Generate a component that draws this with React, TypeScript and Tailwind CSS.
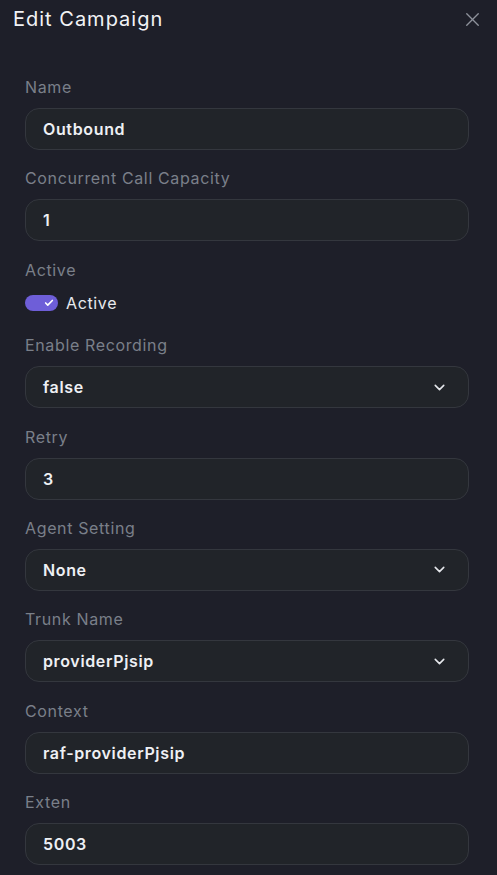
import React from "react"
import { ChevronDown, X, Check } from "lucide-react"

type Field =
  | { kind: "input"; label: string; value: string }
  | { kind: "select"; label: string; value: string }
  | { kind: "toggle"; label: string; value: string }

const fields: Field[] = [
  { kind: "input", label: "Name", value: "Outbound" },
  { kind: "input", label: "Concurrent Call Capacity", value: "1" },
  { kind: "toggle", label: "Active", value: "Active" },
  { kind: "select", label: "Enable Recording", value: "false" },
  { kind: "input", label: "Retry", value: "3" },
  { kind: "select", label: "Agent Setting", value: "None" },
  { kind: "select", label: "Trunk Name", value: "providerPjsip" },
  { kind: "input", label: "Context", value: "raf-providerPjsip" },
  { kind: "input", label: "Exten", value: "5003" },
]

const Box = ({ value, select }: { value: string; select?: boolean }) => (
  <div className="flex h-[42px] items-center justify-between rounded-[14px] border border-[#34373e] bg-[#212429] pl-[17px] pr-[20px]">
    <span className="text-[16px] font-semibold tracking-[0.04em] text-[#eef0f4]">{value}</span>
    {select && <ChevronDown className="h-[17px] w-[17px] text-[#e5e7eb]" strokeWidth={2.2} />}
  </div>
)

export default function App() {
  return (
    <div
      className="min-h-[875px] w-[497px] bg-[#1e1f29] text-white"
      style={{ fontFamily: "Inter, 'Noto Sans', sans-serif" }}
    >
      {/* header */}
      <div className="flex items-center justify-between pl-[13px] pr-[13px] pt-[6px]">
        <h2 className="text-[20px] font-normal leading-[26px] tracking-[0.05em] text-[#f2f3f6]">Edit Campaign</h2>
        <X className="h-[23px] w-[23px] text-[#8e929b]" strokeWidth={1.4} />
      </div>

      {/* form */}
      <div className="flex flex-col gap-[16.4px] pl-[25px] pr-[28px] pt-[43px]">
        {fields.map((f) => (
          <div key={f.label} className="flex flex-col">
            <label className="mb-[9px] text-[16px] leading-[24px] tracking-[0.04em] text-[#7a7f89]">{f.label}</label>
            {f.kind === "toggle" ? (
              <div className="flex items-center gap-[8px] pb-[2px]">
                <div className="flex h-[16px] w-[33px] items-center justify-end rounded-full bg-[#6e5ed8] pr-[4px]">
                  <Check className="h-[10px] w-[10px] text-white" strokeWidth={4} />
                </div>
                <span className="text-[16px] leading-[24px] tracking-[0.04em] text-[#e8eaee]">{f.value}</span>
              </div>
            ) : (
              <Box value={f.value} select={f.kind === "select"} />
            )}
          </div>
        ))}
      </div>
    </div>
  )
}
